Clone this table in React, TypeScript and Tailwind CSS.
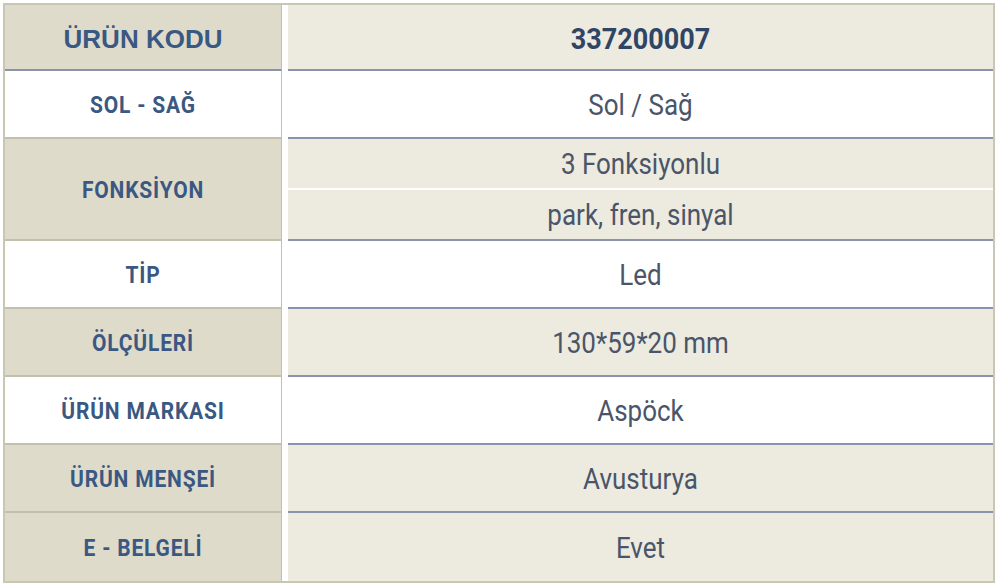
const rows: { label: string; values: string[]; tan: boolean }[] = [
  { label: "SOL - SAĞ", values: ["Sol / Sağ"], tan: false },
  { label: "FONKSİYON", values: ["3 Fonksiyonlu", "park, fren, sinyal"], tan: true },
  { label: "TİP", values: ["Led"], tan: false },
  { label: "ÖLÇÜLERİ", values: ["130*59*20 mm"], tan: true },
  { label: "ÜRÜN MARKASI", values: ["Aspöck"], tan: false },
  { label: "ÜRÜN MENŞEİ", values: ["Avusturya"], tan: true },
  { label: "E - BELGELİ", values: ["Evet"], tan: true },
];

function Row({ label, values, tan, last }: { label: string; values: string[]; tan: boolean; last: boolean }) {
  const line = last ? "" : "border-b-2 border-[#8a92ad]";
  return (
    <div className="flex bg-white">
      <div
        className={`flex w-[277px] items-center justify-center border-r border-[#c2bfae] pt-[3px] ${line} ${
          tan ? "bg-[#dfdbcb]" : "bg-white"
        } ${values.length > 1 ? "h-[102px]" : "h-[68px]"}`}
      >
        <span className="inline-block scale-y-110 font-['Roboto'] text-[21px] font-bold tracking-[0.8px] text-[#3a5881]">
          {label}
        </span>
      </div>
      <div className={`ml-[6px] flex flex-1 flex-col ${line} ${tan ? "bg-[#edeae0]" : "bg-white"}`}>
        {values.map((v, i) => (
          <div
            key={v}
            className={`flex flex-1 items-center justify-center pt-[2px] ${i > 0 ? "border-t-2 border-white" : ""}`}
          >
            <span className="inline-block scale-y-110 font-['Roboto'] text-[26px] text-[#4a5569]">{v}</span>
          </div>
        ))}
      </div>
    </div>
  );
}

export default function App() {
  return (
    <div className="h-[587px] w-[1000px] bg-white pl-[3px] pt-[3px]">
      <div className="w-[992px] border-2 border-[#c9c7b3]">
        {/* header */}
        <div className="flex bg-white">
          <div className="flex h-[66px] w-[277px] items-center justify-center border-r border-b-2 border-r-[#c2bfae] border-b-[#8a92ad] bg-[#dfdbcb] pt-[4px]">
            <span className="font-['Liberation_Sans'] text-[26px] font-bold text-[#3a5881]">ÜRÜN KODU</span>
          </div>
          <div className="ml-[6px] flex flex-1 items-center justify-center border-b-2 border-[#8a92ad] bg-[#edeae0] pt-[4px]">
            <span className="inline-block scale-y-110 font-['Roboto'] text-[27px] font-bold text-[#2f4566]">
              337200007
            </span>
          </div>
        </div>
        {rows.map((r, i) => (
          <Row key={r.label} {...r} last={i === rows.length - 1} />
        ))}
      </div>
    </div>
  );
}
